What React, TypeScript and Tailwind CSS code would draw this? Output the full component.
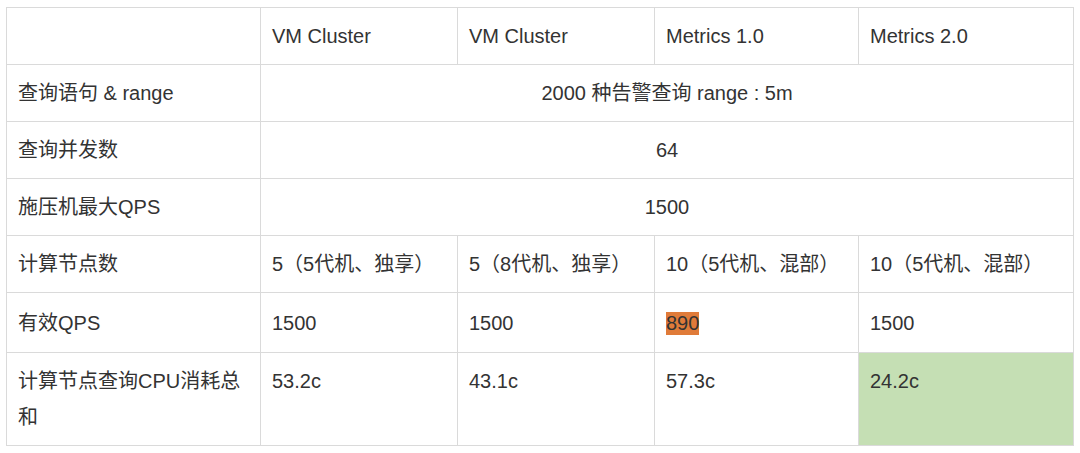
const font = { fontFamily: '"Liberation Sans", "Noto Sans CJK SC", sans-serif' }

const cell = "border border-[#dadada] px-[11px] py-[10px] align-top"

export default function App() {
  return (
    <div className="w-[1080px] h-[453px] bg-white pl-[6px] pt-[7px]" style={font}>
      <table className="border-collapse text-[20px] leading-[36px] text-[#333] table-fixed w-[1067px]">
        <colgroup>
          <col className="w-[254px]" />
          <col className="w-[197px]" />
          <col className="w-[197px]" />
          <col className="w-[204px]" />
          <col className="w-[215px]" />
        </colgroup>
        <tbody>
          <tr className="h-[57px]">
            <td className={cell}></td>
            <td className={cell}>VM Cluster</td>
            <td className={cell}>VM Cluster</td>
            <td className={cell}>Metrics 1.0</td>
            <td className={cell}>Metrics 2.0</td>
          </tr>
          <tr className="h-[57px]">
            <td className={cell}>查询语句 &amp; range</td>
            <td className={cell + " text-center"} colSpan={4}>2000 种告警查询 range : 5m</td>
          </tr>
          <tr className="h-[57px]">
            <td className={cell}>查询并发数</td>
            <td className={cell + " text-center"} colSpan={4}>64</td>
          </tr>
          <tr className="h-[57px]">
            <td className={cell}>施压机最大QPS</td>
            <td className={cell + " text-center"} colSpan={4}>1500</td>
          </tr>
          <tr className="h-[57px]">
            <td className={cell}>计算节点数</td>
            <td className={cell}>5（5代机、独享）</td>
            <td className={cell}>5（8代机、独享）</td>
            <td className={cell}>10（5代机、混部）</td>
            <td className={cell}>10（5代机、混部）</td>
          </tr>
          <tr className="h-[60px]">
            <td className={cell + " !align-middle"}>有效QPS</td>
            <td className={cell + " !align-middle"}>1500</td>
            <td className={cell + " !align-middle"}>1500</td>
            <td className={cell + " !align-middle"}>
              <span className="bg-[#e07b39] leading-[23px] inline-block">890</span>
            </td>
            <td className={cell + " !align-middle"}>1500</td>
          </tr>
          <tr className="h-[91px]">
            <td className={cell}>计算节点查询CPU消耗总和</td>
            <td className={cell}>53.2c</td>
            <td className={cell}>43.1c</td>
            <td className={cell}>57.3c</td>
            <td className={cell + " bg-[#c5dfb4]"}>24.2c</td>
          </tr>
        </tbody>
      </table>
    </div>
  )
}
